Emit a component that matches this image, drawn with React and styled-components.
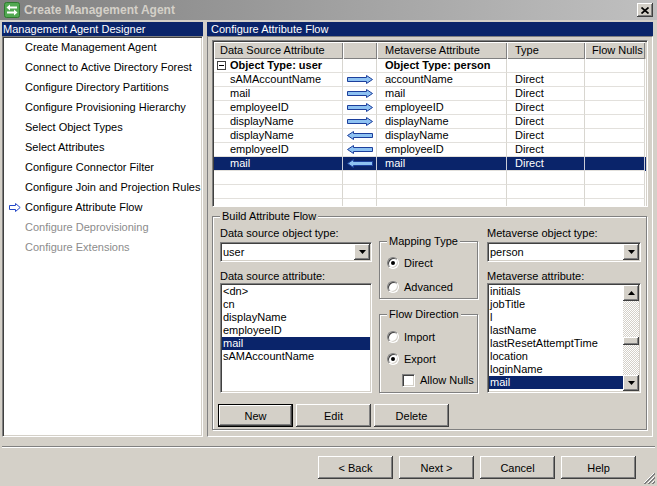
import React from 'react';
import styled, { createGlobalStyle, css } from 'styled-components';

const FACE = '#d4d0c8';
const SHADOW = '#808080';
const DARK = '#404040';
const NAVY = '#0a246a';
const COLS = '129px 34px 130px 78px 60px';

const GlobalStyle = createGlobalStyle`
  html, body { margin: 0; padding: 0; background: ${FACE}; }
  body { font-family: "Liberation Sans", Arial, sans-serif; font-size: 11px; color: #000; }
  * { box-sizing: border-box; }
`;

const sunken = css`
  border: 1px solid;
  border-color: ${SHADOW} #fff #fff ${SHADOW};
  box-shadow: inset 1px 1px 0 ${DARK}, inset -1px -1px 0 ${FACE};
`;

const raised = css`
  box-shadow: inset -1px -1px 0 ${DARK}, inset 1px 1px 0 #fff, inset -2px -2px 0 ${SHADOW}, inset 2px 2px 0 ${FACE};
`;

const Window = styled.div`
  position: relative;
  width: 657px;
  height: 486px;
  background: ${FACE};
  display: flex;
  flex-direction: column;
  overflow: hidden;
  font-family: "Liberation Sans", Arial, sans-serif;
  font-size: 11px;
`;

const TitleBar = styled.div`
  height: 20px;
  flex: none;
  display: flex;
  align-items: center;
  gap: 4px;
  padding: 0 4px;
  background: linear-gradient(to right, #808080, #c0c0c0);
`;

const TitleText = styled.span`
  flex: 1;
  color: ${FACE};
  font-weight: bold;
  font-size: 12px;
  line-height: 20px;
  white-space: nowrap;
`;

const CloseButton = styled.div`
  width: 16px;
  height: 14px;
  background: ${FACE};
  ${raised};
  display: flex;
  align-items: center;
  justify-content: center;
`;

const Body = styled.div`
  margin-top: 2px;
  height: 415px;
  flex: none;
  display: flex;
  gap: 4px;
  padding: 0 4px 0 2px;
`;

const LeftColumn = styled.div`
  width: 201px;
  flex: none;
  display: flex;
  flex-direction: column;
`;

const RightColumn = styled.div`
  flex: 1;
  min-width: 0;
  display: flex;
  flex-direction: column;
`;

const PaneHeader = styled.div`
  height: 14px;
  flex: none;
  background: ${NAVY};
  color: #fff;
  line-height: 14px;
  padding-left: ${p => p.$inset}px;
  white-space: nowrap;
`;

const StepList = styled.div`
  flex: 1;
  background: #fff;
  ${sunken};
`;

const StepItem = styled.div`
  height: 20px;
  display: flex;
  align-items: center;
  padding-left: 6px;
  white-space: nowrap;
  color: ${p => (p.$disabled ? '#8c8c8c' : '#000')};
`;

const StepMarker = styled.span`
  width: 16px;
  flex: none;
  display: flex;
  align-items: center;
`;

const RightPanel = styled.div`
  flex: 1;
  border: 1px solid;
  border-color: ${SHADOW} #fff #fff ${SHADOW};
  padding: 3px 4px 0 4px;
  display: flex;
  flex-direction: column;
  gap: 3px;
`;

const Grid = styled.div`
  height: 167px;
  flex: none;
  background: #fff;
  ${sunken};
  border-width: 1px;
  padding: 1px;
  overflow: hidden;
`;

const HeaderRow = styled.div`
  display: grid;
  grid-template-columns: ${COLS} 1fr;
  height: 17px;
  background: ${FACE};
`;

const HeaderCell = styled.div`
  line-height: 17px;
  padding-left: ${p => p.$pad}px;
  white-space: nowrap;
  overflow: hidden;
  ${p => !p.$filler && css`
    box-shadow: inset 1px 1px 0 #fff, inset -1px -1px 0 ${SHADOW};
  `}
`;

const DataRow = styled.div`
  display: grid;
  grid-template-columns: ${COLS};
  height: 14px;
  background: ${p => (p.$selected ? NAVY : '#fff')};
  color: ${p => (p.$selected ? '#fff' : '#000')};
`;

const Cell = styled.div`
  line-height: 13px;
  height: 14px;
  border-right: 1px solid ${p => (p.$selectedRow ? '#c9ccd8' : '#d8d6d0')};
  border-bottom: 1px solid #e2e0dc;
  padding-left: ${p => p.$pad}px;
  white-space: nowrap;
  overflow: hidden;
  display: flex;
  align-items: center;
  justify-content: ${p => (p.$center ? 'center' : 'flex-start')};
  font-weight: ${p => (p.$bold ? 'bold' : 'normal')};
  gap: 4px;
`;

const ExpandBox = styled.span`
  width: 9px;
  height: 9px;
  flex: none;
  border: 1px solid #404040;
  display: flex;
  align-items: center;
  justify-content: center;
  &::after {
    content: '';
    width: 5px;
    height: 1px;
    background: #000;
  }
`;

const GroupBox = styled.fieldset`
  margin: 0 1px 0 0;
  min-width: 0;
  border: 1px solid ${SHADOW};
  box-shadow: inset 1px 1px 0 #fff, 1px 1px 0 #fff;
  padding: ${p => p.$padding};
  height: ${p => p.$height}px;
  flex: none;
  margin-top: ${p => p.$top || 0}px;
`;

const Legend = styled.legend`
  padding: 0 2px;
  margin-left: ${p => p.$offset || 0}px;
  line-height: 13px;
  background: ${FACE};
  white-space: nowrap;
`;

const FlowColumns = styled.div`
  display: flex;
  align-items: flex-start;
`;

const FieldColumn = styled.div`
  width: ${p => p.$width}px;
  margin-left: ${p => p.$gap || 0}px;
  flex: none;
  display: flex;
  flex-direction: column;
`;

const FieldLabel = styled.div`
  height: 13px;
  line-height: 13px;
  margin-top: ${p => p.$top || 0}px;
  margin-bottom: ${p => p.$bottom || 0}px;
  white-space: nowrap;
`;

const Combo = styled.div`
  height: 20px;
  background: #fff;
  ${sunken};
  display: flex;
  align-items: stretch;
  padding: 1px;
`;

const ComboText = styled.span`
  flex: 1;
  line-height: 16px;
  padding-left: 1px;
`;

const ArrowButton = styled.span`
  width: 16px;
  height: 16px;
  flex: none;
  background: ${FACE};
  ${raised};
  display: flex;
  align-items: center;
  justify-content: center;
`;

const ListBox = styled.div`
  height: 110px;
  background: #fff;
  ${sunken};
  padding: 1px;
  display: flex;
  overflow: hidden;
`;

const ListItems = styled.div`
  flex: 1;
  min-width: 0;
  overflow: hidden;
`;

const ListItem = styled.div`
  height: 13px;
  line-height: 13px;
  padding-left: 1px;
  white-space: nowrap;
  background: ${p => (p.$selected ? NAVY : 'transparent')};
  color: ${p => (p.$selected ? '#fff' : '#000')};
`;

const ScrollBar = styled.div`
  width: 16px;
  flex: none;
  display: flex;
  flex-direction: column;
`;

const ScrollTrack = styled.div`
  flex: 1;
  background-color: #fff;
  background-image: repeating-conic-gradient(${FACE} 0 25%, #fff 0 50%);
  background-size: 2px 2px;
`;

const ScrollThumb = styled.div`
  height: 8px;
  background: ${FACE};
  ${raised};
`;

const OptionStack = styled.div`
  display: flex;
  flex-direction: column;
  gap: ${p => p.$gap}px;
`;

const OptionRow = styled.label`
  height: ${p => p.$h || 16}px;
  display: flex;
  align-items: center;
  gap: 5px;
  padding-left: ${p => p.$indent || 0}px;
  white-space: nowrap;
`;

const Radio = styled.span`
  width: 12px;
  height: 12px;
  flex: none;
  border-radius: 50%;
  border: 1px solid;
  border-color: ${SHADOW} #fff #fff ${SHADOW};
  box-shadow: inset 1px 1px 0 ${DARK}, inset -1px -1px 0 ${FACE};
  background: #fff;
  display: flex;
  align-items: center;
  justify-content: center;
  &::after {
    content: '';
    width: 4px;
    height: 4px;
    border-radius: 50%;
    background: ${p => (p.$checked ? '#000' : 'transparent')};
  }
`;

const CheckBox = styled.span`
  width: 13px;
  height: 13px;
  flex: none;
  background: #fff;
  ${sunken};
`;

const ButtonRow = styled.div`
  display: flex;
  gap: ${p => p.$gap}px;
  margin-top: ${p => p.$top || 0}px;
  margin-left: ${p => p.$left || 0}px;
  justify-content: ${p => (p.$end ? 'flex-end' : 'flex-start')};
  padding-right: ${p => p.$right || 0}px;
`;

const PushButton = styled.button`
  width: 75px;
  height: 23px;
  padding: 0;
  font: inherit;
  color: #000;
  background: ${FACE};
  border: ${p => (p.$default ? '1px solid #000' : 'none')};
  ${raised};
`;

const Separator = styled.div`
  height: 2px;
  flex: none;
  margin: 9px 2px 0 2px;
  border-top: 1px solid ${SHADOW};
  border-bottom: 1px solid #fff;
`;

const SizeGrip = styled.div`
  position: absolute;
  right: 2px;
  bottom: 2px;
  width: 12px;
  height: 12px;
`;

const TitleIcon = () => (
  <svg width="16" height="16" viewBox="0 0 16 16">
    <rect x="0.5" y="0.5" width="15" height="15" rx="2" fill="#52a852" stroke="#2f7a2f" />
    <path d="M2.5 5.5 L6 2.5 V4.5 H13 V6.5 H6 V8.5 Z" fill="#fff" />
    <path d="M13.5 10.5 L10 13.5 V11.5 H3 V9.5 H10 V7.5 Z" fill="#fff" />
  </svg>
);

const CloseGlyph = () => (
  <svg width="8" height="7" viewBox="0 0 8 7">
    <path d="M0.5 0.5 L7.5 6.5 M7.5 0.5 L0.5 6.5" stroke="#000" strokeWidth="1.7" />
  </svg>
);

const NavArrow = () => (
  <svg width="12" height="9" viewBox="0 0 12 9">
    <path d="M0.5 2.5 H6.5 V0.5 L11.2 4.5 L6.5 8.5 V6.5 H0.5 Z" fill="#fff" stroke="#2448c8" />
  </svg>
);

const FlowArrow = ({ dir }) => (
  <svg width="26" height="9" viewBox="0 0 26 9">
    <path
      d="M0.5 2.5 H19.5 V0.5 L25.5 4.5 L19.5 8.5 V6.5 H0.5 Z"
      fill="#8ec2f2"
      stroke="#1c3f9c"
      transform={dir === 'left' ? 'translate(26 0) scale(-1 1)' : undefined}
    />
  </svg>
);

const Triangle = ({ up }) => (
  <svg width="7" height="4" viewBox="0 0 7 4">
    <polygon points={up ? '0,4 7,4 3.5,0' : '0,0 7,0 3.5,4'} fill="#000" />
  </svg>
);

const GripLines = () => (
  <svg width="12" height="12" viewBox="0 0 12 12">
    <path d="M11 1 L1 11 M11 5 L5 11 M11 9 L9 11" stroke="#fff" strokeWidth="1" />
    <path d="M12 1 L1 12 M12 2 L2 12 M12 5 L5 12 M12 6 L6 12 M12 9 L9 12 M12 10 L10 12" stroke={SHADOW} strokeWidth="1" />
  </svg>
);

const steps = [
  { label: 'Create Management Agent' },
  { label: 'Connect to Active Directory Forest' },
  { label: 'Configure Directory Partitions' },
  { label: 'Configure Provisioning Hierarchy' },
  { label: 'Select Object Types' },
  { label: 'Select Attributes' },
  { label: 'Configure Connector Filter' },
  { label: 'Configure Join and Projection Rules' },
  { label: 'Configure Attribute Flow', current: true },
  { label: 'Configure Deprovisioning', disabled: true },
  { label: 'Configure Extensions', disabled: true },
];

const flows = [
  { src: 'sAMAccountName', dir: 'right', mv: 'accountName', type: 'Direct' },
  { src: 'mail', dir: 'right', mv: 'mail', type: 'Direct' },
  { src: 'employeeID', dir: 'right', mv: 'employeeID', type: 'Direct' },
  { src: 'displayName', dir: 'right', mv: 'displayName', type: 'Direct' },
  { src: 'displayName', dir: 'left', mv: 'displayName', type: 'Direct' },
  { src: 'employeeID', dir: 'left', mv: 'employeeID', type: 'Direct' },
  { src: 'mail', dir: 'left', mv: 'mail', type: 'Direct', selected: true },
];

const sourceAttrs = ['<dn>', 'cn', 'displayName', 'employeeID', 'mail', 'sAMAccountName'];
const mvAttrs = ['initials', 'jobTitle', 'l', 'lastName', 'lastResetAttemptTime', 'location', 'loginName', 'mail', 'mailNickname', 'manager'];

const headers = [
  { label: 'Data Source Attribute', pad: 6 },
  { label: '', pad: 0 },
  { label: 'Metaverse Attribute', pad: 8 },
  { label: 'Type', pad: 8 },
  { label: 'Flow Nulls', pad: 7 },
];

export default function App() {
  return (
    <>
      <GlobalStyle />
      <Window>
        <TitleBar>
          <TitleIcon />
          <TitleText>Create Management Agent</TitleText>
          <CloseButton><CloseGlyph /></CloseButton>
        </TitleBar>

        <Body>
          <LeftColumn>
            <PaneHeader $inset={1}>Management Agent Designer</PaneHeader>
            <StepList>
              {steps.map(s => (
                <StepItem key={s.label} $disabled={s.disabled}>
                  <StepMarker>{s.current && <NavArrow />}</StepMarker>
                  {s.label}
                </StepItem>
              ))}
            </StepList>
          </LeftColumn>

          <RightColumn>
            <PaneHeader $inset={4}>Configure Attribute Flow</PaneHeader>
            <RightPanel>
              <Grid>
                <HeaderRow>
                  {headers.map((h, i) => (
                    <HeaderCell key={i} $pad={h.pad}>{h.label}</HeaderCell>
                  ))}
                  <HeaderCell $filler />
                </HeaderRow>
                <DataRow>
                  <Cell $pad={3} $bold><ExpandBox />Object Type: user</Cell>
                  <Cell />
                  <Cell $pad={8} $bold>Object Type: person</Cell>
                  <Cell />
                  <Cell />
                </DataRow>
                {flows.map((f, i) => (
                  <DataRow key={i} $selected={f.selected}>
                    <Cell $pad={16} $selectedRow={f.selected}>{f.src}</Cell>
                    <Cell $center $selectedRow={f.selected}><FlowArrow dir={f.dir} /></Cell>
                    <Cell $pad={8} $selectedRow={f.selected}>{f.mv}</Cell>
                    <Cell $pad={8} $selectedRow={f.selected}>{f.type}</Cell>
                    <Cell $selectedRow={f.selected} />
                  </DataRow>
                ))}
                {[0, 1, 2].map(i => (
                  <DataRow key={`e${i}`}>
                    <Cell /><Cell /><Cell /><Cell /><Cell />
                  </DataRow>
                ))}
              </Grid>

              <GroupBox $height={220} $padding="4px 5px 0 7px">
                <Legend>Build Attribute Flow</Legend>
                <FlowColumns>
                  <FieldColumn $width={152}>
                    <FieldLabel $bottom={2}>Data source object type:</FieldLabel>
                    <Combo>
                      <ComboText>user</ComboText>
                      <ArrowButton><Triangle /></ArrowButton>
                    </Combo>
                    <FieldLabel $top={8}>Data source attribute:</FieldLabel>
                    <ListBox>
                      <ListItems>
                        {sourceAttrs.map(a => (
                          <ListItem key={a} $selected={a === 'mail'}>{a}</ListItem>
                        ))}
                      </ListItems>
                    </ListBox>
                  </FieldColumn>

                  <FieldColumn $width={100} $gap={7}>
                    <GroupBox $height={64} $top={8} $padding="7px 4px 0 7px">
                      <Legend>Mapping Type</Legend>
                      <OptionStack $gap={8}>
                        <OptionRow><Radio $checked />Direct</OptionRow>
                        <OptionRow><Radio />Advanced</OptionRow>
                      </OptionStack>
                    </GroupBox>
                    <GroupBox $height={85} $top={9} $padding="8px 4px 0 7px">
                      <Legend>Flow Direction</Legend>
                      <OptionStack $gap={6}>
                        <OptionRow><Radio />Import</OptionRow>
                        <OptionRow><Radio $checked />Export</OptionRow>
                        <OptionRow $h={14} $indent={15}><CheckBox />Allow Nulls</OptionRow>
                      </OptionStack>
                    </GroupBox>
                  </FieldColumn>

                  <FieldColumn $width={154} $gap={8}>
                    <FieldLabel $bottom={2}>Metaverse object type:</FieldLabel>
                    <Combo>
                      <ComboText>person</ComboText>
                      <ArrowButton><Triangle /></ArrowButton>
                    </Combo>
                    <FieldLabel $top={8}>Metaverse attribute:</FieldLabel>
                    <ListBox>
                      <ListItems>
                        {mvAttrs.map(a => (
                          <ListItem key={a} $selected={a === 'mail'}>{a}</ListItem>
                        ))}
                      </ListItems>
                      <ScrollBar>
                        <ArrowButton><Triangle up /></ArrowButton>
                        <ScrollTrack>
                          <ScrollThumb style={{ marginTop: 36 }} />
                        </ScrollTrack>
                        <ArrowButton><Triangle /></ArrowButton>
                      </ScrollBar>
                    </ListBox>
                  </FieldColumn>
                </FlowColumns>
                <ButtonRow $gap={3} $top={11} $left={-2}>
                  <PushButton $default>New</PushButton>
                  <PushButton>Edit</PushButton>
                  <PushButton>Delete</PushButton>
                </ButtonRow>
              </GroupBox>
            </RightPanel>
          </RightColumn>
        </Body>

        <Separator />
        <ButtonRow $gap={6} $top={8} $end $right={21}>
          <PushButton>&lt; Back</PushButton>
          <PushButton>Next &gt;</PushButton>
          <PushButton>Cancel</PushButton>
          <PushButton>Help</PushButton>
        </ButtonRow>
        <SizeGrip><GripLines /></SizeGrip>
      </Window>
    </>
  );
}
